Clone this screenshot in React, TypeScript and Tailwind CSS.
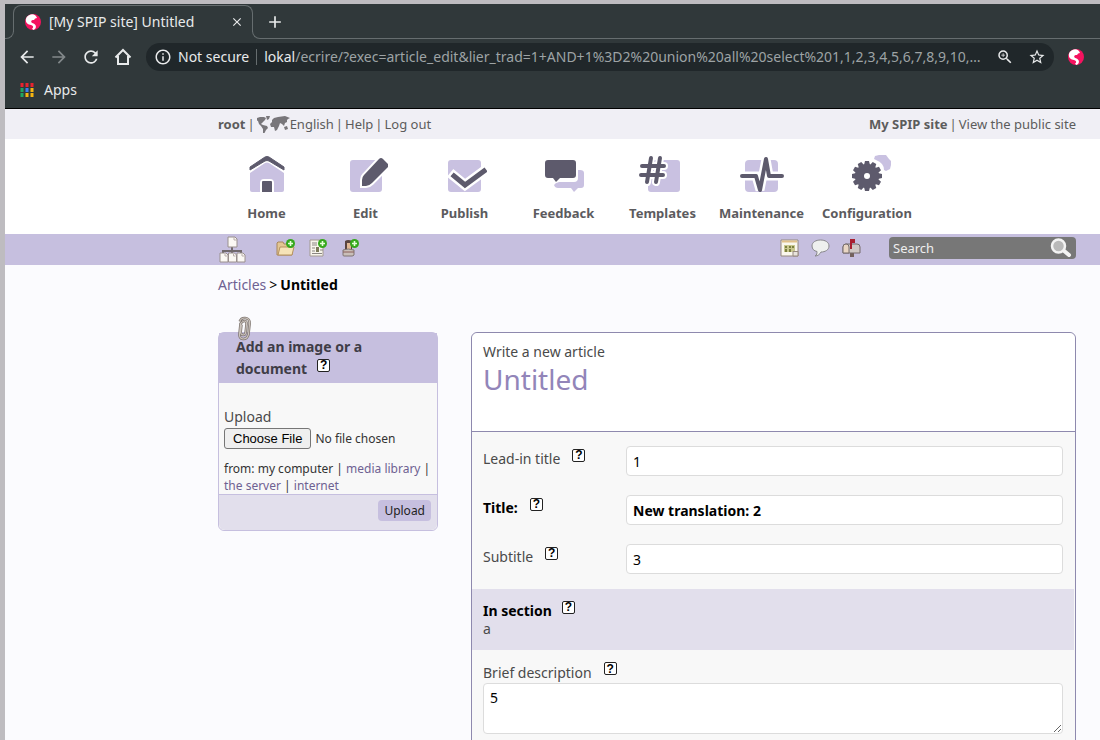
import type { ReactNode } from "react";
import { MdArrowBack, MdArrowForward, MdRefresh, MdInfoOutline, MdZoomIn, MdStarBorder, MdClose, MdAdd } from "react-icons/md";

function SpipLogo() {
  return (
    <svg viewBox="0 0 16 16" className="size-4 shrink-0" aria-hidden="true">
      <circle cx="8" cy="8" r="8" fill="#f5125f" />
      <path d="M7 .2C3.500.5.8 3.200.8 6.200c0 2.600 1.900 3.900 4 4.500 1.700.5 3.200.7 3.300 2 .1 1-.6 1.500-1 2l1.200 1.200c1.500-.3 2.700-1.600 2.600-3.300-.1-2-1.400-2.800-2.900-3.400-1-.4-1.900-.8-1.800-1.800.1-1.200 1.500-1.600 3-1.500.4-1.200 1.500-1.900 2.800-1.900C11.300 1.700 9.300.1 7 .2z" fill="#fff" />
    </svg>
  );
}

function AppsIcon() {
  const colors = ["#e8232f", "#e8232f", "#e8232f", "#1fa463", "#3a7df0", "#f6b511", "#1fa463", "#f6b511", "#f6b511"];
  return (
    <svg viewBox="0 0 14 14" className="size-3.5" aria-hidden="true">
      {colors.map((c, i) => (
        <rect key={i} x={(i % 3) * 5 + 0.5} y={Math.floor(i / 3) * 5} width="3" height="4" fill={c} />
      ))}
    </svg>
  );
}

function HouseOutline() {
  return (
    <svg viewBox="0 0 20 20" className="size-5" aria-hidden="true">
      <path d="M2.500 10.500L10 3l7.500 7.500M5 9v8h3.500v-0M5 17h10V9" fill="none" stroke="currentColor" strokeWidth="2" />
    </svg>
  );
}

function WorldMap() {
  return (
    <svg viewBox="0 0 33 18" className="h-[18px] w-[33px] shrink-0" aria-hidden="true">
      <g fill="#78767a">
        <path d="M0 3l3-1 4 0 2 1-1 2-3 3-1 1 2 1 4 1 1 2-2 2-1 2-1 2-1-1 0-4-2-3-2-2-1-3-2-1z" />
        <path d="M9 1l4 0-1 3-2 1z" />
        <path d="M15 5l2-2 4-1 7-1 5 2-2 1-1 1 0 2-2 1-1 3-2-2-2-1-1 3-2 4-2 1-1-4-3 0-1-3 2-2z" />
        <path d="M27 12l3-1 1 3-3 1z" />
      </g>
    </svg>
  );
}

const DARK = "#5d5a6c";
const LIGHT = "#c9c1e1";

function HomeIcon() {
  return (
    <svg viewBox="0 0 44 40" className="h-10 w-11" aria-hidden="true">
      <path d="M5 19L20 9q2-1 4 0l15 10v17q0 2-2 2H7q-2 0-2-2z" fill={LIGHT} />
      <path d="M15 38V29q0-4 4-4h6q4 0 4 4v9z" fill="#fff" />
      <path d="M17 38V28q0-1 1-1h8q1 0 1 1v10z" fill={DARK} />
      <path d="M5 16v-3L20 3q2-1 4 0l15 10v3L24 7q-2-1-4 0z" fill={DARK} stroke={DARK} strokeWidth="1" strokeLinejoin="round" />
    </svg>
  );
}

function EditIcon() {
  return (
    <svg viewBox="0 0 44 40" className="h-10 w-11" aria-hidden="true">
      <rect x="6" y="6" width="32" height="32" rx="3" fill={LIGHT} />
      <path d="M18 32v-6q0-3 2-5L35 5q2-2 4 0l5 5q1 2 0 3L28 29q-3 3-6 3z" fill={DARK} stroke="#fff" strokeWidth="4" />
      <path d="M18 32v-6q0-3 2-5L35 5q2-2 4 0l5 5q1 2 0 3L28 29q-3 3-6 3z" fill={DARK} />
    </svg>
  );
}

function PublishIcon() {
  return (
    <svg viewBox="0 0 44 40" className="h-10 w-11" aria-hidden="true">
      <rect x="5" y="6" width="33" height="32" rx="3" fill={LIGHT} />
      <path d="M11 22l11 9 19-14" fill="none" stroke="#fff" strokeWidth="10" strokeLinecap="square" />
      <path d="M11 22l11 9 19-14" fill="none" stroke={DARK} strokeWidth="5" strokeLinecap="square" />
    </svg>
  );
}

function FeedbackIcon() {
  return (
    <svg viewBox="0 0 44 40" className="h-10 w-11" aria-hidden="true">
      <path d="M36 16h2q4 0 4 3v12q0 3-3 3h-3l-4 4-3-4H16q-3 0-4-3 1-2 5-3h15q4 0 4-4z" fill={LIGHT} />
      <path d="M6 6h25q3 0 3 3v12q0 3-3 3H18l-4 4-3-4H6q-3 0-3-3V9q0-3 3-3z" fill={DARK} />
    </svg>
  );
}

function TemplatesIcon() {
  const hash = "M10 4L6 28M19 4l-4 24M1 12h22M0 21h22";
  return (
    <svg viewBox="0 0 44 40" className="h-10 w-11 overflow-visible" aria-hidden="true">
      <rect x="7" y="6" width="32" height="32" rx="3" fill={LIGHT} />
      <path d={hash} fill="none" stroke="#fff" strokeWidth="8" strokeLinecap="round" />
      <path d={hash} fill="none" stroke={DARK} strokeWidth="4" strokeLinecap="round" />
    </svg>
  );
}

function MaintenanceIcon() {
  const pulse = "M2 22h14l4 14 6-31 3 17h13";
  return (
    <svg viewBox="0 0 44 40" className="h-10 w-11" aria-hidden="true">
      <rect x="5" y="6" width="33" height="32" rx="4" fill={LIGHT} />
      <path d={pulse} fill="none" stroke="#fff" strokeWidth="9" />
      <path d={pulse} fill="none" stroke={DARK} strokeWidth="4" strokeLinecap="round" strokeLinejoin="round" />
    </svg>
  );
}

function ConfigurationIcon() {
  return (
    <svg viewBox="0 0 44 40" className="h-10 w-11 overflow-visible" aria-hidden="true">
      <path d="M29 5l1-3 4-1 3 0 4 0 3 4 2 2 0 4-1 4-4 2-2-1q0-7-8-10z" fill={LIGHT} />
      <g fill={DARK} transform="translate(22 22)">
        {Array.from({ length: 12 }, (_, i) => (
          <path key={i} d="M-3-11l1-4h4l1 4z" transform={`rotate(${i * 30})`} />
        ))}
        <circle r="12" />
        <circle r="3" fill="#fff" />
      </g>
    </svg>
  );
}

function SitemapIcon() {
  return (
    <svg viewBox="0 0 27 27" className="size-[27px]" aria-hidden="true">
      <path d="M13 11v6M4 17v-2h18v2" stroke="#71696d" strokeWidth="2" fill="none" />
      <path d="M9 1h7l2 2v8H9z" fill="#fbf8f4" stroke="#9a908e" />
      <path d="M15 1v3h3" fill="none" stroke="#b9aeac" />
      {[1, 9.500, 18].map((x) => (
        <g key={x}>
          <path d={`M${x} 17h6l2 2v7h-8z`} fill="#fbf8f4" stroke="#9a908e" />
          <path d={`M${x + 5} 18v2h2`} fill="none" stroke="#b9aeac" />
        </g>
      ))}
    </svg>
  );
}

function PlusBadge() {
  return (
    <g>
      <circle cx="14.500" cy="4.500" r="4.500" fill="#35a81c" />
      <path d="M14.500 2v5M12 4.500h5" stroke="#e6ffd9" strokeWidth="1.600" />
    </g>
  );
}

function FolderAddIcon() {
  return (
    <svg viewBox="0 0 19 18" className="h-[18px] w-[19px]" aria-hidden="true">
      <path d="M1 16V4l1-1h5l1 2h8v11z" fill="#e3c693" stroke="#a9865a" />
      <path d="M2 16L4 8h14l-2 8z" fill="#f6e3b8" stroke="#b5925f" />
      <PlusBadge />
    </svg>
  );
}

function ArticleAddIcon() {
  return (
    <svg viewBox="0 0 19 18" className="h-[18px] w-[19px]" aria-hidden="true">
      <path d="M2 1h13v16H2z" fill="#f7f5ec" stroke="#a39a91" />
      <path d="M4 4h5M4 6h5M4 9h3M4 12h3M4 14.500h10M12 11h3" stroke="#8b8782" />
      <rect x="8" y="8" width="3" height="5" fill="#7c7a5a" />
      <PlusBadge />
    </svg>
  );
}

function AuthorAddIcon() {
  return (
    <svg viewBox="0 0 19 18" className="h-[18px] w-[19px]" aria-hidden="true">
      <path d="M5 2q3-2 7 0v8H5z" fill="#5a4440" />
      <path d="M7 4h4v6H7z" fill="#e1b793" />
      <path d="M3 11q5-2 11 0v5q-1 1-2 1H4q-1 0-1-1z" fill="#c9bfb8" stroke="#7f7472" />
      <path d="M3 13h11" stroke="#8a5f5b" />
      <PlusBadge />
    </svg>
  );
}

function CalendarIcon() {
  return (
    <svg viewBox="0 0 19 18" className="h-[18px] w-[19px]" aria-hidden="true">
      <path d="M1 1h17v16H1z" fill="#faf7ee" stroke="#95887f" />
      <path d="M2 2.500h15" stroke="#e1c08b" strokeWidth="2" />
      <path d="M4 6h11v7H4z" fill="#c9c78e" />
      <path d="M5 7h2v2H5zM9 7h2v2H9zM12 7h2v2h-2zM9 10h2v3H9zM5 10h2v3H5z" fill="#7c8040" />
      <path d="M13 12.500h5V17h-5z" fill="#e8e4dc" stroke="#95887f" />
    </svg>
  );
}

function BubbleIcon() {
  return (
    <svg viewBox="0 0 19 18" className="h-[18px] w-[19px]" aria-hidden="true">
      <path d="M9.500 1C14 1 18 3 18 7s-4 6-8 6c-1 2-3 4-6 4 2-1 2-3 2-4.500C3 12 1 10 1 7c0-4 4-6 8.500-6z" fill="#eef0ee" stroke="#87868a" />
    </svg>
  );
}

function MailboxIcon() {
  return (
    <svg viewBox="0 0 19 18" className="h-[18px] w-[19px]" aria-hidden="true">
      <path d="M8 13h4v5H8z" fill="#73615d" />
      <path d="M1 8q0-3 3-3h11q3 0 3 3v6H1z" fill="#cfc8c5" stroke="#756b6c" />
      <path d="M1 8q0-3 3-3t3 3v6H1z" fill="#e9d6c4" stroke="#756b6c" />
      <path d="M8 10V0h5v4h-3v6z" fill="#a81f30" />
    </svg>
  );
}

function SearchIcon() {
  return (
    <svg viewBox="0 0 22 20" className="h-5 w-[22px]" aria-hidden="true">
      <path d="M13 12l6 5" stroke="#f3f3f3" strokeWidth="4" strokeLinecap="round" />
      <circle cx="8.500" cy="8" r="6.500" fill="#b9b9b9" stroke="#f3f3f3" strokeWidth="2.500" />
    </svg>
  );
}

function Paperclip() {
  const clip = "M6 9v7q0 3 2.500 3t2.500-3V8q0-3-2-3T5 8v10q0 5 4 5t5-5V7q0-5-5-5-4 0-5 4";
  return (
    <svg viewBox="0 0 18 26" className="h-[26px] w-[18px]" aria-hidden="true">
      <g transform="rotate(6 9 13)">
        <path d={clip} fill="none" stroke="#7f7671" strokeWidth="2.600" />
        <path d={clip} fill="none" stroke="#cbc3bb" strokeWidth="1.100" />
      </g>
    </svg>
  );
}

function Help({ topic }: { topic: string }) {
  return (
    <a
      href="#help"
      aria-label={`Help: ${topic}`}
      className="mb-1 flex size-[13px] shrink-0 items-center justify-center rounded-[2px] border border-[#222] bg-white font-['Liberation_Sans',sans-serif] text-[12px] leading-3 font-bold text-black"
    >
      ?
    </a>
  );
}

const navItems: { label: string; icon: ReactNode }[] = [
  { label: "Home", icon: <HomeIcon /> },
  { label: "Edit", icon: <EditIcon /> },
  { label: "Publish", icon: <PublishIcon /> },
  { label: "Feedback", icon: <FeedbackIcon /> },
  { label: "Templates", icon: <TemplatesIcon /> },
  { label: "Maintenance", icon: <MaintenanceIcon /> },
  { label: "Configuration", icon: <ConfigurationIcon /> },
];

function BrowserChrome() {
  return (
    <header className="border-b border-black bg-[#30383a] text-[#e8eaeb]">
      <div className="flex h-[35px] items-end pt-px">
        <div className="-mr-px h-[22px] w-[9px] rounded-br-lg border-r border-b border-[#666d6f]" />
        <div className="flex h-[27px] w-60 items-center gap-2 self-start rounded-t-lg border border-b-0 border-[#666d6f] pt-1.5 pr-2 pl-[11px]">
          <SpipLogo />
          <span className="flex-1 truncate text-[14px] leading-5">[My SPIP site] Untitled</span>
          <button aria-label="Close tab"><MdClose className="size-[14px]" /></button>
        </div>
        <div className="-ml-px h-[22px] flex-1 rounded-bl-lg border-b border-l border-[#666d6f]">
          <button aria-label="New tab" className="-mt-[5px] ml-3 block"><MdAdd className="size-5" /></button>
        </div>
      </div>
      <div className="flex h-[35px] items-center pr-4 pl-3">
        <div className="flex w-[129px] gap-3">
          <button aria-label="Back"><MdArrowBack className="size-5" /></button>
          <button aria-label="Forward"><MdArrowForward className="size-5 text-[#82888a]" /></button>
          <button aria-label="Reload"><MdRefresh className="size-5" /></button>
          <button aria-label="Home page"><HouseOutline /></button>
        </div>
        <div className="flex h-7 min-w-0 flex-1 items-center rounded-full bg-[#20272a] px-2 text-[14px] leading-5">
          <MdInfoOutline className="mr-1.5 size-[18px] shrink-0" />
          <span className="shrink-0">Not secure</span>
          <span className="mx-[7px] h-4 w-px shrink-0 bg-[#666d6f]" />
          <span className="min-w-0 flex-1 truncate text-[#9da3a5]">
            <span className="text-[#e8eaeb]">lokal</span>/ecrire/?exec=article_edit&amp;lier_trad=1+AND+1%3D2%20union%20all%20select%201,1,2,3,4,5,6,7,8,9,10,…
          </span>
          <button aria-label="Zoom" className="mr-[14px] ml-0.5 shrink-0"><MdZoomIn className="size-[18px]" /></button>
          <button aria-label="Bookmark this page" className="shrink-0"><MdStarBorder className="size-[18px]" /></button>
        </div>
        <button aria-label="SPIP extension" className="ml-[14px]"><SpipLogo /></button>
      </div>
      <div className="flex h-[34px] items-center pb-0.5 pl-[15px]">
        <a href="#apps" className="flex items-center gap-2.5 text-[14px] leading-5"><AppsIcon />Apps</a>
      </div>
    </header>
  );
}

function TextRow({ id, label, value, required }: { id: string; label: string; value: string; required?: boolean }) {
  const weight = required ? "font-bold text-black" : "";
  return (
    <div className="flex h-[30px] items-center">
      <div className="flex w-[143px] items-center gap-3">
        <label htmlFor={id} className={`pb-1 ${weight}`}>{label}</label>
        <div className="pb-2"><Help topic={label} /></div>
      </div>
      <input id={id} defaultValue={value} className={`h-full min-w-0 flex-1 rounded border border-[#dcdcdc] bg-white px-1.5 text-black ${required ? "font-bold" : ""}`} />
    </div>
  );
}

export default function App() {
  return (
    <div className="h-screen overflow-hidden bg-[#bebcc0] pt-1 pl-[5px] font-['Noto_Sans',sans-serif]">
      <BrowserChrome />
      <div className="h-full bg-[#fbfbfe] text-[14px] leading-5 text-[#4a4a4a]">
        <div className="flex h-[30px] items-center justify-between bg-[#f0eff5] pr-6 pl-[213px] text-[13px] text-[#5c5c5c]">
          <div className="flex items-center gap-0.5">
            <a href="#root" className="font-bold">root</a>|
            <a href="#lang" className="flex items-center"><WorldMap />English</a>|
            <a href="#help">Help</a>|
            <a href="#logout">Log out</a>
          </div>
          <div className="flex gap-0.5">
            <a href="#site" className="font-bold">My SPIP site</a>|
            <a href="#public">View the public site</a>
          </div>
        </div>

        <nav className="flex h-[95px] bg-white pt-[15px] pr-6 pl-[212px]">
          {navItems.map((item) => (
            <a key={item.label} href="#nav" className="flex min-w-[99px] flex-col items-center gap-[9px] px-1 text-[13px] font-bold text-[#5c5b5e] last:px-[11px]">
              {item.icon}
              {item.label}
            </a>
          ))}
        </nav>

        <div className="flex h-[31px] items-center justify-between bg-[#c6bfdf] pr-6 pl-[214px]">
          <div className="flex items-center">
            <a href="#sitemap" aria-label="Site map" className="mr-[30px]"><SitemapIcon /></a>
            <div className="flex gap-[13px] pb-1">
              <a href="#section" aria-label="New section"><FolderAddIcon /></a>
              <a href="#article" aria-label="New article"><ArticleAddIcon /></a>
              <a href="#author" aria-label="New author"><AuthorAddIcon /></a>
            </div>
          </div>
          <div className="flex items-center">
            <div className="flex gap-3 pb-1">
              <a href="#calendar" aria-label="Calendar"><CalendarIcon /></a>
              <a href="#forum" aria-label="Forum"><BubbleIcon /></a>
              <a href="#messages" aria-label="Messages"><MailboxIcon /></a>
            </div>
            <form className="mb-1 ml-7 flex h-[22px] w-[187px] items-center rounded bg-[#777] pr-1 pl-1">
              <input aria-label="Search" placeholder="Search" className="min-w-0 flex-1 text-[13px] text-white outline-none placeholder:text-[#eee]" />
              <button type="button" aria-label="Run search"><SearchIcon /></button>
            </form>
          </div>
        </div>

        <main className="pr-6 pl-[213px]">
          <div className="flex gap-[3px] pt-[10px] text-black">
            <a href="#articles" className="text-[#6e6192]">Articles</a>&gt;<strong>Untitled</strong>
          </div>

          <div className="mt-[37px] flex items-start gap-[33px]">
            <section className="relative w-[220px] shrink-0 rounded-md border border-[#c6bfdf] bg-[#f8f8f8]">
              <div className="absolute -top-[17px] left-4"><Paperclip /></div>
              <h2 className="bg-[#c6bfdf] pt-[3px] pr-4 pb-[3px] pl-[17px] text-[14px] leading-[22px] font-bold text-[#3f3d47]">
                Add an image or a
                <span className="flex items-center gap-2.5">document <span className="pb-1"><Help topic="documents" /></span></span>
              </h2>
              <div className="px-[5px] pt-6 text-[12px] text-[#333]">
                <label htmlFor="file" className="block text-[14px] leading-5 text-[#4a4a4a]">Upload</label>
                <input
                  id="file"
                  type="file"
                  className="mt-px block w-full text-[12px] leading-5 file:mr-1 file:h-[21px] file:rounded-[3px] file:border file:border-solid file:border-[#767676] file:bg-[#efefef] file:px-2 file:font-['Liberation_Sans',sans-serif] file:text-[13px] file:text-black"
                />
                <p className="mt-[11px] leading-[17px]">
                  from: my computer | <a href="#media" className="text-[#6e6192]">media library</a> |<br />
                  <a href="#server" className="text-[#6e6192]">the server</a> | <a href="#internet" className="text-[#6e6192]">internet</a>
                </p>
              </div>
              <div className="flex h-9 items-start justify-end rounded-b-md border-t border-[#c6bfdf] bg-[#e2dfec] px-1.5 pt-[5px]">
                <button className="h-[21px] rounded bg-[#c6bfdf] px-1.5 text-[12px] text-[#222]">Upload</button>
              </div>
            </section>

            <section className="min-w-0 flex-1 rounded-t-md border border-[#8e89ae] bg-[#f8f8f8]">
              <div className="h-[99px] rounded-t-md border-b border-[#8e89ae] bg-white px-[11px] pt-[9px]">
                <p className="text-[14px] leading-5">Write a new article</p>
                <h1 className="text-[28px] leading-[34px] text-[#9285b9]">Untitled</h1>
              </div>
              <form>
                <div className="flex flex-col gap-[19px] pt-[14px] pr-3 pb-[15px] pl-[11px]">
                  <TextRow id="leadin" label="Lead-in title" value="1" />
                  <TextRow id="title" label="Title:" value="New translation: 2" required />
                  <TextRow id="subtitle" label="Subtitle" value="3" />
                </div>
                <div className="mr-px h-[61px] bg-[#e2dfec] px-[11px] pt-[13px]">
                  <div className="flex h-[18px] items-center gap-2.5 font-bold text-black">In section <div className="pb-1"><Help topic="In section" /></div></div>
                  <p className="leading-[18px]">a</p>
                </div>
                <div className="pt-3 pr-3 pb-12 pl-[11px]">
                  <div className="flex h-[21px] items-center gap-3">
                    <label htmlFor="brief">Brief description</label>
                    <div className="pb-1"><Help topic="Brief description" /></div>
                  </div>
                  <textarea id="brief" defaultValue="5" className="block h-[51px] w-full resize rounded border border-[#dcdcdc] bg-white px-1.5 py-1 text-black" />
                </div>
              </form>
            </section>
          </div>
        </main>
      </div>
    </div>
  );
}
